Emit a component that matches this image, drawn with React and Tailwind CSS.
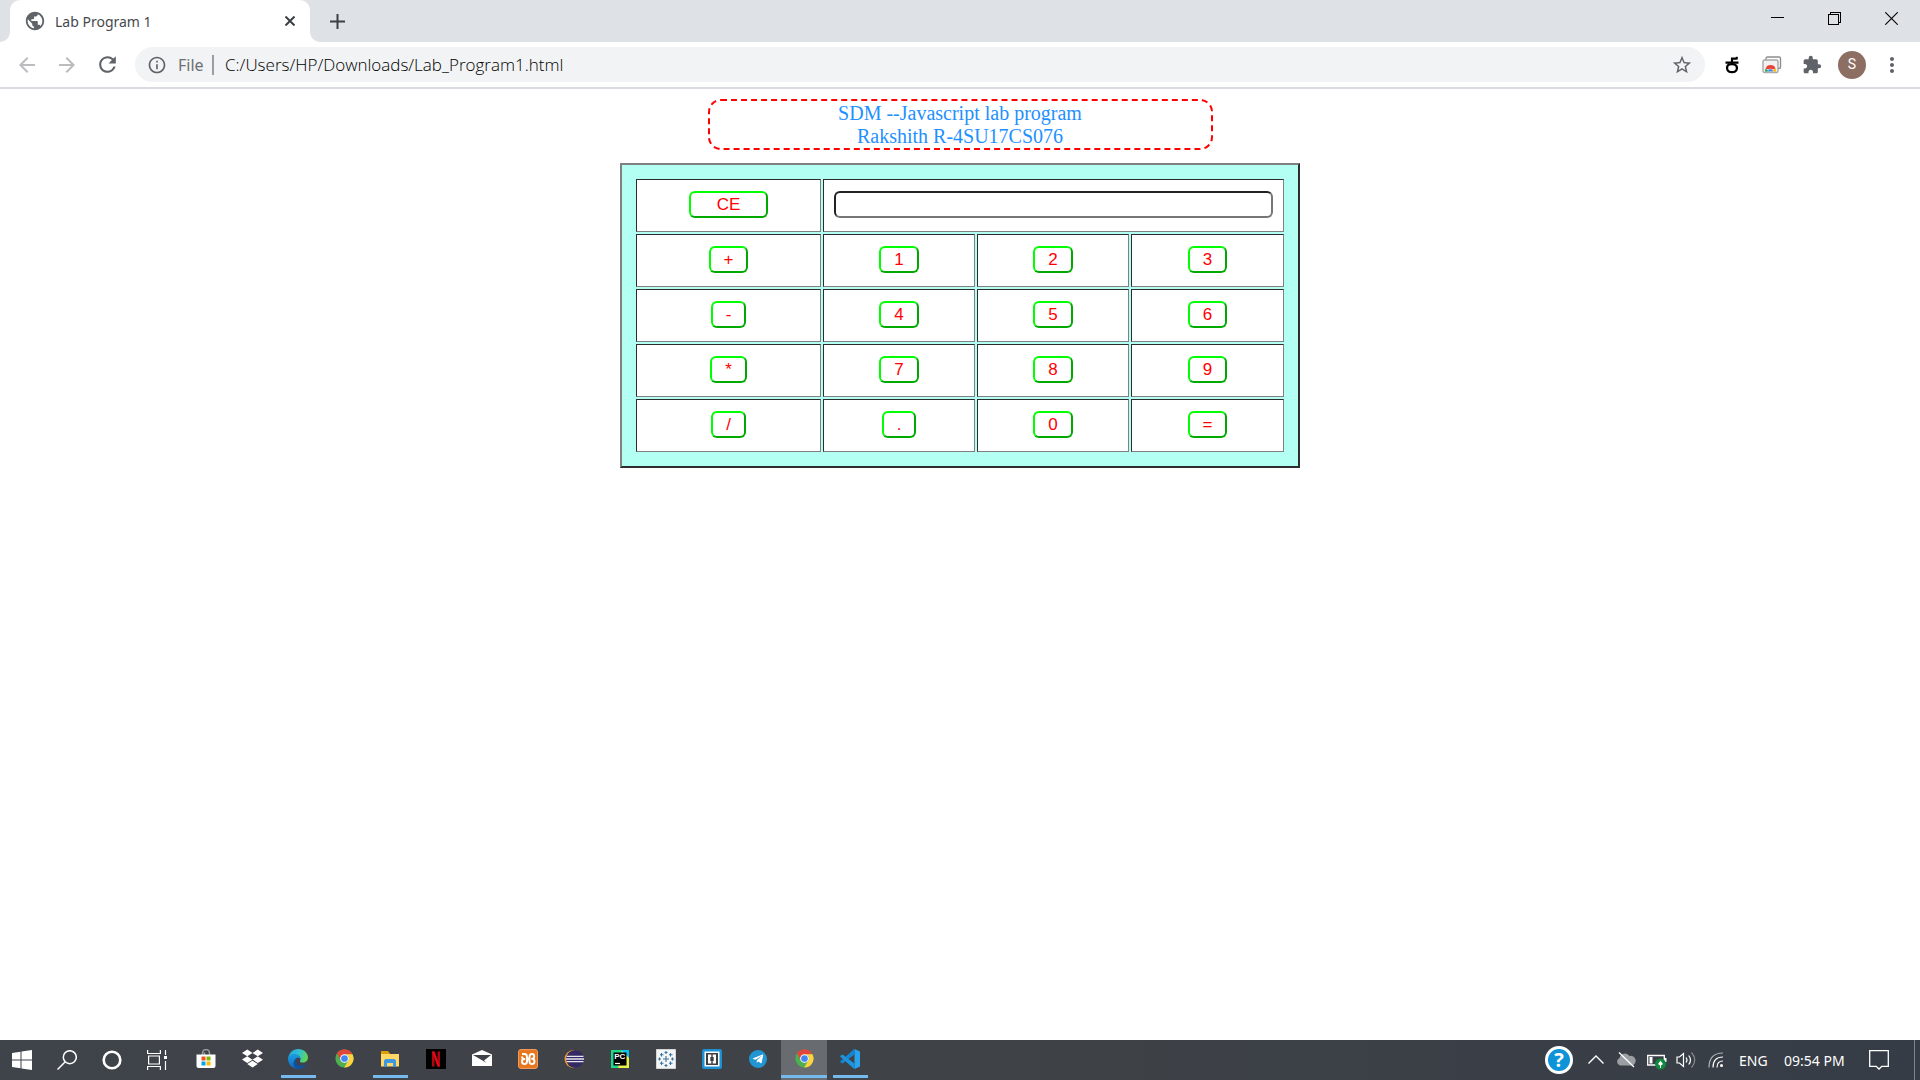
import React, { useState } from "react";
import {
  MdArrowBack,
  MdArrowForward,
  MdRefresh,
  MdInfoOutline,
  MdStarBorder,
  MdExtension,
  MdMoreVert,
  MdPublic,
} from "react-icons/md";
import { FaDropbox, FaTelegramPlane } from "react-icons/fa";

/* ---------- Browser chrome ---------- */

function WindowControls() {
  const cls = "flex h-[37px] w-[57px] items-center justify-center";
  return (
    <div className="ml-auto flex">
      <button aria-label="Minimize" className={cls}>
        <svg width="13" height="13" shapeRendering="crispEdges"><path d="M0 5.5H13" stroke="#000" /></svg>
      </button>
      <button aria-label="Restore" className={cls}>
        <svg width="13" height="13" fill="none" stroke="#000" shapeRendering="crispEdges">
          <path d="M.5 2.5h10v10h-10zM2.5 2.5v-2h10v10h-2" />
        </svg>
      </button>
      <button aria-label="Close" className={cls}>
        <svg width="13" height="13" stroke="#000" strokeWidth="1.1"><path d="M.3 .3 12.7 12.7M12.7 .3 .3 12.7" /></svg>
      </button>
    </div>
  );
}

function TabStrip() {
  return (
    <div className="flex h-[42px] bg-[#dee1e6]">
      <div className="flex w-[10px] items-end bg-white">
        <div className="h-full w-full rounded-br-[10px] bg-[#dee1e6]" />
      </div>
      <div className="bg-[#dee1e6]">
        <div className="flex h-full w-[300px] items-center rounded-t-[10px] bg-white pl-3.5">
          <MdPublic className="size-[22px] text-[#5f6368]" />
          <span className="ml-[9px] text-[14px] text-[#45494d]">Lab Program 1</span>
          <button aria-label="Close tab" className="mr-[15px] ml-auto">
            <svg width="10" height="10" stroke="#3c4043" strokeWidth="2"><path d="M.5 .5 9.5 9.5M9.5 .5 .5 9.5" /></svg>
          </button>
        </div>
      </div>
      <div className="w-[10px] bg-white">
        <div className="h-full w-full rounded-bl-[10px] bg-[#dee1e6]" />
      </div>
      <button aria-label="New tab" className="ml-1 flex w-[26px] items-center justify-center">
        <svg width="15" height="15" stroke="#3c4043" strokeWidth="2"><path d="M7.5 0v15M0 7.5h15" /></svg>
      </button>
      <WindowControls />
    </div>
  );
}

function ToolButton({ label, className = "text-[#5f6368]", children }) {
  return (
    <button aria-label={label} className={`flex h-full w-10 shrink-0 items-center justify-center ${className}`}>
      {children}
    </button>
  );
}

function Toolbar() {
  return (
    <div className="flex h-[47px] items-center border-b-2 border-[#dadbe0] bg-white pr-2 pl-[7px]">
      <ToolButton label="Back" className="text-[#babcbe]"><MdArrowBack className="size-6" /></ToolButton>
      <ToolButton label="Forward" className="text-[#babcbe]"><MdArrowForward className="size-6" /></ToolButton>
      <ToolButton label="Reload"><MdRefresh className="size-[25px]" /></ToolButton>
      <div className="mr-[7px] ml-2 flex h-[35px] min-w-0 flex-1 items-center rounded-full bg-[#f1f3f4] px-3">
        <MdInfoOutline className="size-5 shrink-0 text-[#5f6368]" />
        <label htmlFor="url" className="ml-[11px] w-[26px] text-[16px] text-[#6c7074]">File</label>
        <div className="ml-2 h-5 w-0.5 bg-[#9b9da0]" />
        <input
          id="url"
          className="ml-[11px] min-w-0 flex-1 bg-transparent font-['Open_Sans',sans-serif] text-[17px] font-light text-[#000] outline-none"
          defaultValue="C:/Users/HP/Downloads/Lab_Program1.html"
        />
        <button aria-label="Bookmark this tab" className="text-[#5f6368]">
          <MdStarBorder className="size-[22px]" />
        </button>
      </div>
      <ToolButton label="Kannada input">
        <svg width="14" height="18" viewBox="0 0 14 18" fill="none" stroke="#000" strokeWidth="2.2">
          <path d="M.5 6.6H13.5M7 2.6V8M6 2.6H11.5" />
          <path d="M11.8 .8v2.7" strokeWidth="2" />
          <path d="M4.500 8C.8 10 1 16.200 7 16.200S13.200 10 9.500 8.500C8 8 6 8 4.500 8.500" />
        </svg>
      </ToolButton>
      <ToolButton label="Remote desktop">
        <svg width="20" height="18" viewBox="0 0 20 18">
          <rect x="4" y="1" width="14.5" height="11.5" rx="1.5" fill="#fff" stroke="#8d8d8d" strokeWidth="1.4" />
          <rect x="1" y="4" width="15" height="12.5" rx="1.5" fill="#f1f1f1" stroke="#a8a8a8" strokeWidth="1.4" />
          <path d="M3.2 15.7a5.4 5.4 0 0 1 .3-3.2L8.5 15.7z" fill="#34a853" />
          <path d="M8.5 15.7 13.6 12.5a5.4 5.4 0 0 1 .3 3.2z" fill="#fbbc05" />
          <path d="M3.500 12.500a5.400 5.400 0 0 1 10.100 0L8.500 14z" fill="#ea4335" />
          <path d="M5.700 15.700a2.800 2.800 0 0 1 5.600 0z" fill="#4285f4" stroke="#fff" strokeWidth=".4" />
        </svg>
      </ToolButton>
      <ToolButton label="Extensions"><MdExtension className="size-5" /></ToolButton>
      <ToolButton label="Profile">
        <span className="flex size-7 items-center justify-center rounded-full bg-[#8d6e63] font-['Roboto',sans-serif] text-[14px] text-white">S</span>
      </ToolButton>
      <ToolButton label="Menu"><MdMoreVert className="size-6" /></ToolButton>
    </div>
  );
}

/* ---------- Calculator page ---------- */

const ROWS = [
  ["+", "1", "2", "3"],
  ["-", "4", "5", "6"],
  ["*", "7", "8", "9"],
  ["/", ".", "0", "="],
];

const CELL =
  "border border-t-[#2c2c2c] border-r-[#808080] border-b-[#808080] border-l-[#2c2c2c] bg-white px-2.5 pt-[11px] pb-[13px]";

function CalcButton({ wide, children, onClick }) {
  return (
    <button
      onClick={onClick}
      className={`mx-auto block h-[27px] rounded-[6px] border-2 border-t-[#00ff00] border-r-[#00a900] border-b-[#00a900] border-l-[#00ff00] bg-white text-[17px] leading-[23px] text-[#ff0000] ${
        wide ? "px-[26px]" : "px-[13px]"
      }`}
    >
      {children}
    </button>
  );
}

function Calculator() {
  const [value, setValue] = useState("");
  const press = (key) => {
    if (key !== "=") return setValue(value + key);
    try {
      setValue(String(Function(`return (${value || '""'})`)()));
    } catch {
      setValue("Error");
    }
  };
  return (
    <table className="mx-auto mt-[13px] w-[680px] table-fixed border-separate border-spacing-0.5 border-2 border-t-[#808080] border-r-[#2c2c2c] border-b-[#2c2c2c] border-l-[#808080] bg-[#b3fff3] p-3 font-['Liberation_Sans',Arial,sans-serif]">
      <colgroup>
        <col className="w-[185px]" />
        <col className="w-[152px]" />
        <col className="w-[152px]" />
        <col />
      </colgroup>
      <tbody>
        <tr>
          <td className={CELL}>
            <CalcButton wide onClick={() => setValue("")}>CE</CalcButton>
          </td>
          <td className={CELL} colSpan={3}>
            <input
              aria-label="Result"
              value={value}
              onChange={(e) => setValue(e.target.value)}
              className="block h-[27px] w-full rounded-[6px] border-2 border-t-[#222] border-r-[#767676] border-b-[#767676] border-l-[#222] bg-white px-1 text-[17px] outline-none"
            />
          </td>
        </tr>
        {ROWS.map((row) => (
          <tr key={row[0]}>
            {row.map((key) => (
              <td key={key} className={CELL}>
                <CalcButton onClick={() => press(key)}>{key}</CalcButton>
              </td>
            ))}
          </tr>
        ))}
      </tbody>
    </table>
  );
}

/* ---------- Taskbar ---------- */

function ChromeLogo() {
  return (
    <svg width="19" height="19" viewBox="0 0 48 48">
      <circle cx="24" cy="24" r="23" fill="#4caf50" />
      <path d="M24 1a23 23 0 0 1 20 12H24a11 11 0 0 0-10 6L5 11A23 23 0 0 1 24 1z" fill="#e0473a" />
      <path d="M5 11 14.5 29.5 24 24V13H44A23 23 0 0 0 5 11z" fill="#e0473a" />
      <path d="M44 13H24a11 11 0 0 1 9.5 16.5L23 47A23 23 0 0 0 44 13z" fill="#ffd23f" />
      <circle cx="24" cy="24" r="11" fill="#fff" />
      <circle cx="24" cy="24" r="8.5" fill="#4285f4" />
    </svg>
  );
}

function EdgeLogo() {
  return (
    <svg width="20" height="20" viewBox="0 0 24 24">
      <defs>
        <linearGradient id="edgeTop" x1="0" y1="0.3" x2="1" y2="0.6">
          <stop offset="0" stopColor="#2aa5e0" />
          <stop offset="0.5" stopColor="#30c2d0" />
          <stop offset="1" stopColor="#62d84e" />
        </linearGradient>
        <linearGradient id="edgeBody" x1="0" y1="0" x2="0" y2="1">
          <stop offset="0" stopColor="#1b9de2" />
          <stop offset="1" stopColor="#1268bd" />
        </linearGradient>
      </defs>
      <path d="M.3 11C1 4.5 6 0 12.2 0 19 0 24 5 24 10.2c0 3.8-3 6-6.3 6-2.7 0-4-1-3.2-2.2C16.5 10.5 13 6.5 8.5 6.5 4.5 6.5 1 8.5.3 11z" fill="url(#edgeTop)" />
      <path d="M0 12C0 8 4 6.3 8 6.3c4 0 7.3 2.8 7 6-.8-1.5-2-2.2-3.3-2.2-3.7 2-4.3 6.5-1.2 10 2.5 2.8 5 3 6.5 2.7A12 12 0 0 1 0 12z" fill="url(#edgeBody)" />
      <path d="M11.5 10.2c-2.3 1.5-2.7 4.3-1.3 6.5 2.3 3.6 7.5 4.3 12.3 1.3-1.3 2.6-4.6 5.700-10.500 6C4.5 22.5 5 12.5 11.5 10.2z" fill="#12509c" />
    </svg>
  );
}

const SYSTEM_ITEMS = [
  ["Start", <svg width="20" height="20" fill="#fff"><path d="M0 3 8.5 1.7V9.5H0zM9.5 1.6 20 0V9.5H9.5zM0 10.5H8.5V18.3L0 17zM9.5 10.5H20V20L9.5 18.4z" /></svg>],
  ["Search", <svg width="20" height="20" fill="none" stroke="#fff" strokeWidth="1.5"><circle cx="12.8" cy="7.2" r="6.5" /><path d="M8 12 .5 19.5" /></svg>],
  ["Cortana", <svg width="20" height="20" fill="none" stroke="#fff" strokeWidth="2.6"><circle cx="10" cy="10" r="8.3" /></svg>],
  ["Task View", <svg width="20" height="20" fill="none" stroke="#fff" strokeWidth="1.2"><path d="M.6 0v3.5h12.8V0M.6 20v-3.5h12.8V20M1.6 6h10.8v8H1.6zM18.5 0v5M18.5 11v9" /><path d="M17 6h3v3h-3z" fill="#fff" stroke="none" /></svg>],
];

const APPS = [
  { name: "Microsoft Store", icon: <svg width="20" height="20"><path d="M6.5 6V4a3.5 3.5 0 0 1 7 0v2M8.5 6V3.5" fill="none" stroke="#9a9da1" strokeWidth="1.5" /><path d="M.5 5.5h19V17a2 2 0 0 1-2 2h-15a2 2 0 0 1-2-2z" fill="#fff" /><path d="M5.5 7.5h4v4h-4z" fill="#f25022" /><path d="M10.5 7.5h4v4h-4z" fill="#7fba00" /><path d="M5.5 12.5h4v4h-4z" fill="#00a4ef" /><path d="M10.5 12.5h4v4h-4z" fill="#ffb900" /></svg> },
  { name: "Dropbox", icon: <FaDropbox className="size-[21px] text-white" /> },
  { name: "Edge", open: true, icon: <EdgeLogo /> },
  { name: "Chrome", icon: <ChromeLogo /> },
  { name: "File Explorer", open: true, icon: <svg width="20" height="20"><path d="M1 2h7l2 2.5V8H1z" fill="#dba009" /><path d="M1 5h18v12.5H1z" fill="#ffd866" /><path d="M4 18v-6.5L5.5 10h9l1.5 1.5V18h-3v-4H7v4z" fill="#3c98e0" /></svg> },
  { name: "Netflix", icon: <svg width="20" height="20"><path d="M0 0h20v20H0z" fill="#000" /><path d="M6 2.5h2.5v15H6zM11.5 2.5H14v15h-2.5z" fill="#b1060f" /><path d="M6 2.5h2.5L14 17.5h-2.5z" fill="#e50914" /></svg> },
  { name: "Mail", icon: <svg width="20" height="20"><path d="M0 5.5 10 1l10 4.5V17H0z" fill="#fff" /><path d="M1 6h18l-7 5.5 2.5 2.5L10.5 11.5z" fill="#3e4247" /></svg> },
  { name: "XAMPP", icon: <svg width="20" height="20"><rect x=".5" y=".5" width="19" height="19" rx="2.5" fill="#e8761f" stroke="#ee9a5c" /><path d="M4 5H6.500C8.500 5 9 6.500 9 8v1.500h2.500V8c0-2 1-3 2.500-3s2.200 1 2.200 2.200S15.500 9.800 14 9.800c1.500 0 2.500 1 2.500 2.700S15.500 15 14 15s-2.500-1-2.500-2.500v-2H9v2C9 14 8 15 6.500 15S4 14 4 12.500 5 10 6.500 10C5 10 4 9 4 7.500" fill="none" stroke="#fff" strokeWidth="1.900" strokeLinejoin="round" /></svg> },
  { name: "Eclipse", icon: <svg width="20" height="20"><circle cx="9.5" cy="10" r="9" fill="#f29a2e" /><circle cx="11" cy="10" r="9" fill="#342a63" /><path d="M2.5 7.3h17M2 10h18M2.5 12.7h17" stroke="#e6e3ef" strokeWidth="1.3" /></svg> },
  { name: "PyCharm", icon: <svg width="20" height="20"><path d="M1 1h18v18H1z" fill="#21d789" /><path d="M12 1h7v18H8z" fill="#e8f04a" /><path d="M11 1h8v8z" fill="#07c3f2" /><path d="M3.5 3.5h13v13h-13z" fill="#000" /><text x="4.2" y="10" fill="#fff" fontFamily="Liberation Sans" fontWeight="700" fontSize="8">PC</text><path d="M5 14.5h5" stroke="#fff" strokeWidth="1.2" /></svg> },
  { name: "Tableau", icon: <svg width="20" height="20" fill="none"><path d="M.5.5h19v19H.5z" fill="#f4f5f6" stroke="#d5d5d5" /><path d="M10 7v6M7 10h6M10 2v3M8.5 3.5h3M10 15v3M8.5 16.5h3M3.5 8.5v3M2 10h3M16.5 8.5v3M15 10h3M5.5 4v3.5M4 5.7h3.5M14.5 4v3.5M13 5.7h3.5M5.5 12.5V16M4 14.3h3.5M14.5 12.5V16M13 14.3h3.5" stroke="#39729d" strokeWidth="1.1" /></svg> },
  { name: "Brackets", icon: <svg width="20" height="20"><rect width="20" height="20" rx="2" fill="#1b90d2" /><path d="M2.5 2.5h15v15h-15z" fill="#fff" /><path d="M4 4h12v12H4z" fill="#3f3f3f" /><path d="M9.3 5.5H6v9h3.3zM10.7 5.5H14v9h-3.3z" fill="#fff" /><path d="M8.3 8h3.4v4H8.3z" fill="#3f3f3f" /></svg> },
  { name: "Telegram", icon: <span className="flex size-[18px] items-center justify-center rounded-full bg-[#2295d3]"><FaTelegramPlane className="size-3 text-white" /></span> },
  { name: "Chrome window", open: true, active: true, icon: <ChromeLogo /> },
  { name: "Visual Studio Code", open: true, icon: <svg width="20" height="20"><path d="M14.5 0 20 2.5v15L14.5 20z" fill="#2aa3ee" /><path d="M14.5 0v5.5L2.5 14.5.3 13.3v-1L14 .3z" fill="#1684cf" /><path d="M14.5 20v-5.5L2.5 5.5.3 6.7v1L14 19.7z" fill="#1b93df" /></svg> },
];

function Taskbar() {
  return (
    <footer className="flex h-10 shrink-0 bg-linear-to-r from-[#3f434a] via-[#3f4347] to-[#363c46] text-white">
      {SYSTEM_ITEMS.map(([name, icon]) => (
        <button key={name} aria-label={name} className="flex w-[45px] items-center justify-center pr-px">{icon}</button>
      ))}
      <div className="ml-[3px] flex">
        {APPS.map(({ name, icon, open, active }) => (
          <button
            key={name}
            aria-label={name}
            className={`flex w-[46px] flex-col items-center pb-0.5 ${active ? "bg-[#686b6f]" : ""}`}
          >
            <span className="flex flex-1 items-center pt-0.5">{icon}</span>
            <span className={`h-[3px] ${open ? "bg-[#76b9ed]" : ""} ${active ? "w-full" : "w-[35px]"}`} />
          </button>
        ))}
      </div>
      <div className="ml-auto flex items-center">
        <button aria-label="Help" className="flex size-7 items-center justify-center rounded-full border-[3px] border-white bg-[#0e93d8] font-['Open_Sans',sans-serif] text-[20px] leading-none font-bold">?</button>
        <svg className="ml-[15px]" width="16" height="16" fill="none" stroke="#fff" strokeWidth="1.4"><path d="M.5 11.5 8 4l7.5 7.5" /></svg>
        <svg className="ml-3" width="20" height="20"><path d="M4 15.5a4 4 0 0 1-.5-7.5 5.5 5.5 0 0 1 10-2 4.8 4.8 0 0 1 2.5 9.500z" fill="#9b9ea2" /><path d="M3 2.5 18 17" stroke="#fff" strokeWidth="1.3" /></svg>
        <svg className="ml-[11px]" width="20" height="20"><path d="M.7 5.5h16.6v9.500H.7z" fill="none" stroke="#fff" strokeWidth="1.3" /><path d="M2.5 7h3v6.5h-3zM17.5 8h2v4h-2z" fill="#fff" /><circle cx="13.5" cy="14" r="5.5" fill="#10893e" /><path d="M13.5 10.7 16 14l-2.5 2-2.5-2zM13 15h1v3h-1z" fill="#fff" /></svg>
        <svg className="ml-[9px]" width="20" height="20" fill="none" stroke="#fff" strokeWidth="1.2"><path d="M1 7h2.5L7.5 3.5v13L3.5 13H1z" /><path d="M10 7.5q2 2.5 0 5M12.7 5.5q3.5 4.5 0 9" /><path d="M15.5 2.5q6.5 7.5 0 15" stroke="#868a90" /></svg>
        <svg className="ml-3" width="17" height="18" fill="none" stroke="#fff" strokeWidth="1.2"><circle cx="13.5" cy="14.5" r="1.5" fill="#fff" stroke="none" /><path d="M9 16.5q0-6.5 6-6.5M5 16.5Q5 6 15 6" /><path d="M1 16.5Q1 2 15 2" stroke="#b0b3b7" /></svg>
        <span className="ml-[14px] w-7 text-[14px]">ENG</span>
        <time className="ml-[17px] w-[60px] text-[14px] whitespace-nowrap">09:54 PM</time>
        <button aria-label="Notifications" className="ml-[25px]"><svg width="20" height="20" fill="none" stroke="#fff" strokeWidth="1.3"><path d="M.7.7h18.600v15.600h-6.500L10 19l-2.800-2.700H.7z" /></svg></button>
        <div className="mr-[5px] ml-[25px] h-10 w-px bg-[#80848a]" />
      </div>
    </footer>
  );
}

export default function App() {
  return (
    <div className="flex h-screen flex-col bg-white font-['Noto_Sans','Open_Sans',sans-serif]">
      <header>
        <TabStrip />
        <Toolbar />
      </header>
      <main className="flex-1 overflow-auto pt-2.5">
        <h1 className="mx-auto w-[505px] rounded-[13px] border-2 border-dashed border-[#ff0000] pt-px text-center font-['Liberation_Serif','Times_New_Roman',serif] text-[20px] leading-[23px] text-[#1e90ff]">
          SDM --Javascript lab program
          <br />
          Rakshith R-4SU17CS076
        </h1>
        <Calculator />
      </main>
      <Taskbar />
    </div>
  );
}
